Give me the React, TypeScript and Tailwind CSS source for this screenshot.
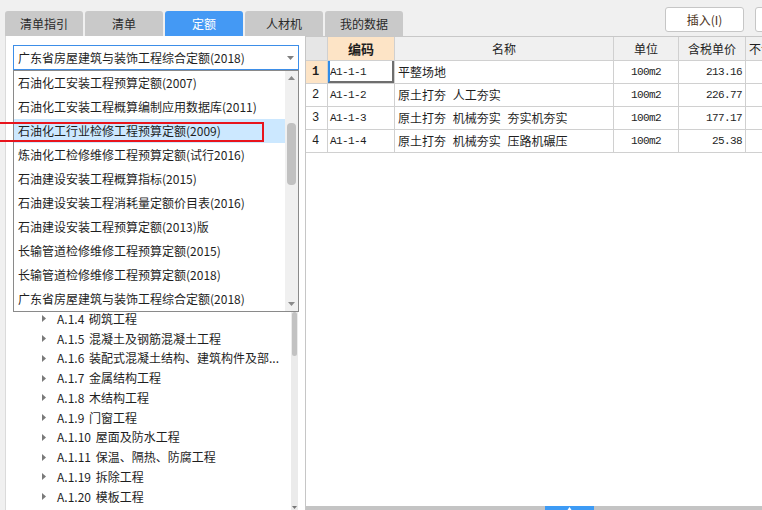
import React from "react";

const ui = "font-['Noto_Sans_CJK_SC','Microsoft_YaHei',sans-serif]";
const mono = "font-['Liberation_Mono','Noto_Sans_CJK_SC',monospace]";

const tabs = ["清单指引", "清单", "定额", "人材机", "我的数据"];

const listItems = [
  "石油化工安装工程预算定额(2007)",
  "石油化工安装工程概算编制应用数据库(2011)",
  "石油化工行业检修工程预算定额(2009)",
  "炼油化工检修维修工程预算定额(试行2016)",
  "石油建设安装工程概算指标(2015)",
  "石油建设安装工程消耗量定额价目表(2016)",
  "石油建设安装工程预算定额(2013)版",
  "长输管道检修维修工程预算定额(2015)",
  "长输管道检修维修工程预算定额(2018)",
  "广东省房屋建筑与装饰工程综合定额(2018)",
];

const hiddenTree = [
  "A 房屋建筑与装饰工程",
  "A.1 房屋建筑工程",
  "A.1.1 土石方工程",
  "平整场地及碾压",
  "原土打夯",
  "人工土方",
  "人工石方",
  "机械土方",
  "机械石方",
  "土石方运输",
  "A.1.2 地基处理及边坡支护工程",
  "A.1.3 桩基础工程",
];

const tree = [
  "A.1.4 砌筑工程",
  "A.1.5 混凝土及钢筋混凝土工程",
  "A.1.6 装配式混凝土结构、建筑构件及部...",
  "A.1.7 金属结构工程",
  "A.1.8 木结构工程",
  "A.1.9 门窗工程",
  "A.1.10 屋面及防水工程",
  "A.1.11 保温、隔热、防腐工程",
  "A.1.19 拆除工程",
  "A.1.20 模板工程",
];

const rows = [
  { code: "A1-1-1", name: "平整场地", unit: "100m2", price: "213.16" },
  { code: "A1-1-2", name: "原土打夯 人工夯实", unit: "100m2", price: "226.77" },
  { code: "A1-1-3", name: "原土打夯 机械夯实 夯实机夯实", unit: "100m2", price: "177.17" },
  { code: "A1-1-4", name: "原土打夯 机械夯实 压路机碾压", unit: "100m2", price: "25.38" },
];

function TriRight() {
  return (
    <svg width="4" height="7" viewBox="0 0 4 7" className="shrink-0">
      <path d="M0 0 L4 3.5 L0 7 Z" fill="#7a7a7a" />
    </svg>
  );
}

function TriDown({ color = "#7a7a7a" }: { color?: string }) {
  return (
    <svg width="7" height="4" viewBox="0 0 7 4" className="shrink-0">
      <path d="M0 0 L7 0 L3.5 4 Z" fill={color} />
    </svg>
  );
}

function TriUp({ color = "#7a7a7a" }: { color?: string }) {
  return (
    <svg width="7" height="4" viewBox="0 0 7 4" className="shrink-0">
      <path d="M0 4 L7 4 L3.5 0 Z" fill={color} />
    </svg>
  );
}

export default function App() {
  return (
    <div className={`relative w-[762px] h-[510px] overflow-hidden bg-[#f0f0f0] text-[12px] text-[#1e1e1e] ${ui}`}>
      {/* top bar */}
      <div className="flex h-[36px] items-end pl-[5px] overflow-hidden">
        <div className="flex gap-[2px] shrink-0">
          {tabs.map((t) => (
            <div
              key={t}
              className={
                t === "定额"
                  ? "w-[78px] h-[25px] rounded-t-[3px] flex items-center justify-center bg-[#4499f4] text-white"
                  : "w-[78px] h-[25px] rounded-t-[3px] flex items-center justify-center bg-[#c9c9c9] text-[#2a2a2a]"
              }
            >
              {t}
            </div>
          ))}
        </div>
        <div className="self-start mt-[7px] ml-[262px] flex gap-[11px] shrink-0">
          <div className="w-[79px] h-[25px] shrink-0 rounded-[3px] border border-[#c6c6c6] bg-white flex items-center justify-center text-[#4a3219]">
            插入(I)
          </div>
          <div className="w-[79px] h-[25px] shrink-0 rounded-[3px] border border-[#c6c6c6] bg-white" />
        </div>
      </div>

      {/* main */}
      <div className="flex h-[474px]">
        {/* left panel */}
        <div className="relative ml-[5px] w-[301px] shrink-0 bg-white border-l border-r border-l-[#dadada] border-r-[#c6c6c6] flex flex-col">
          <div className="pt-[9px] pl-[7px]">
            <div className="w-[286px] h-[25px] border border-[#3d8ee8] flex items-center pl-[4px] pr-[4px]">
              <span className="whitespace-nowrap">广东省房屋建筑与装饰工程综合定额(2018)</span>
              <span className="ml-auto flex">
                <TriDown color="#808080" />
              </span>
            </div>
          </div>

          <div className="mt-[2px] flex-1 min-h-0 flex overflow-hidden">
            <div className="flex-1 pl-[36px]">
              {hiddenTree.map((t, i) => (
                <div key={"h" + i} className="invisible h-[19.75px] flex items-center gap-[11px] whitespace-nowrap">
                  <TriRight />
                  <span>{t}</span>
                </div>
              ))}
              {tree.map((t, i) => (
                <div key={i} className="h-[19.75px] flex items-center gap-[11px] whitespace-nowrap [word-spacing:2px]">
                  <TriRight />
                  <span>{t}</span>
                </div>
              ))}
            </div>
            <div className="relative w-[7px] mr-[7px] bg-[#ebebeb] shrink-0">
              <div className="absolute top-[240px] left-[1px] w-[5px] h-[44px] rounded-[3px] bg-[#c2c2c2]" />
              <div className="absolute bottom-[1px] left-[1px] flex">
                <svg width="5" height="3" viewBox="0 0 5 3">
                  <path d="M0 0 L5 0 L2.5 3 Z" fill="#777" />
                </svg>
              </div>
            </div>
          </div>

          {/* dropdown list */}
          <div className="absolute left-[7px] top-[34px] z-10 w-[286px] h-[242px] border border-[#8a8a8a] bg-white flex">
            <div className="w-[271px]">
              {listItems.map((t, i) => (
                <div
                  key={t}
                  className={
                    i === 2
                      ? "h-[24px] flex items-center pl-[4px] whitespace-nowrap bg-[#cce8ff]"
                      : "h-[24px] flex items-center pl-[4px] whitespace-nowrap"
                  }
                >
                  {t}
                </div>
              ))}
            </div>
            <div className="relative w-[13px] bg-[#f0f0f0]">
              <div className="absolute top-[5px] left-[3px] flex">
                <TriUp color="#8a8a8a" />
              </div>
              <div className="absolute top-[52px] left-[2px] w-[9px] h-[62px] rounded-[4px] bg-[#c1c1c1]" />
              <div className="absolute bottom-[5px] left-[3px] flex">
                <TriDown color="#8a8a8a" />
              </div>
            </div>
          </div>
        </div>

        {/* table */}
        <div className="flex-1 min-w-0 bg-white border-t border-[#c8c8c8] flex flex-col overflow-hidden">
          <div className="flex h-[24px] border-b border-[#d0d0d0] shrink-0 bg-[#f0f0f0]">
            <div className="w-[22px] shrink-0 border-r border-[#d0d0d0] bg-[#e6e6e6]" />
            <div className="w-[67px] shrink-0 border-r border-[#d0d0d0] bg-[#fde4c6] flex items-center justify-center font-bold text-[13px]">
              编码
            </div>
            <div className="w-[219px] shrink-0 border-r border-[#d0d0d0] flex items-center justify-center">名称</div>
            <div className="w-[65px] shrink-0 border-r border-[#d0d0d0] flex items-center justify-center">单位</div>
            <div className="w-[67px] shrink-0 border-r border-[#d0d0d0] flex items-center justify-center">含税单价</div>
            <div className="flex-1 flex items-center pl-[3px] whitespace-nowrap">不含税单价</div>
          </div>

          {rows.map((r, i) => (
            <div key={r.code} className="flex h-[23px] border-b border-[#d0d0d0] shrink-0">
              <div
                className={
                  i === 0
                    ? `w-[22px] shrink-0 border-r border-[#d0d0d0] bg-[#fde4c6] flex items-center pl-[6px] font-bold text-[12px] ${mono}`
                    : `w-[22px] shrink-0 border-r border-[#d0d0d0] flex items-center pl-[6px] text-[12px] ${mono}`
                }
              >
                {i + 1}
              </div>
              <div className={`relative w-[67px] shrink-0 border-r border-[#d0d0d0] flex items-center pl-[2px] text-[11px] tracking-[-0.6px] ${mono}`}>
                {r.code}
                {i === 0 && (
                  <div className="absolute inset-0 border-l-2 border-l-[#2f8ce8] border-r-2 border-r-[#6e6e6e] border-b-2 border-b-[#6e6e6e]" />
                )}
              </div>
              <div className="w-[219px] shrink-0 border-r border-[#d0d0d0] flex items-center pl-[3px] whitespace-nowrap [word-spacing:4px]">
                {r.name}
              </div>
              <div className={`w-[65px] shrink-0 border-r border-[#d0d0d0] flex items-center justify-center text-[11px] tracking-[-0.6px] ${mono}`}>
                {r.unit}
              </div>
              <div className={`w-[67px] shrink-0 border-r border-[#d0d0d0] flex items-center justify-end pr-[3px] text-[11px] tracking-[-0.6px] ${mono}`}>
                {r.price}
              </div>
              <div className="flex-1" />
            </div>
          ))}

          <div className="mt-auto h-[4px] shrink-0 bg-[#c4c4c4] relative">
            <div className="absolute left-[239px] top-0 w-[49px] h-full bg-[#3d9bf5] flex justify-center">
              <svg width="5" height="4" viewBox="0 0 5 4">
                <path d="M2.5 1 L4.5 4 L0.5 4 Z" fill="#ffffff" />
              </svg>
            </div>
          </div>
        </div>
      </div>

      {/* red highlight annotation */}
      <div className="absolute left-[-10px] top-[122px] z-20 w-[274px] h-[20px] border-2 border-[#e8141c]" />
    </div>
  );
}
